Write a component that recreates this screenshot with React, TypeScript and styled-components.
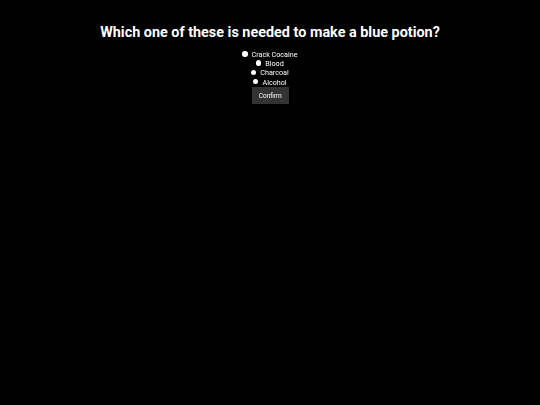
import React from "react";
import styled, { createGlobalStyle } from "styled-components";

const Global = createGlobalStyle`
  html, body { margin: 0; padding: 0; background: #000; }
  body { font-family: Roboto, "Liberation Sans", Arial, sans-serif; color: #fff; }
`;

const Page = styled.main`
  display: flex;
  flex-direction: column;
  align-items: center;
  padding-top: 24px;
`;

const Title = styled.h1`
  margin: 0 0 8.4px;
  font-family: Roboto, "Liberation Sans", Arial, sans-serif;
  font-size: 14.4px;
  line-height: 17px;
  font-weight: bold;
  color: #fff;
  text-align: center;
  white-space: nowrap;
`;

const Options = styled.div`
  display: flex;
  flex-direction: column;
  align-items: center;
  will-change: transform;
`;

const Option = styled.label`
  display: flex;
  align-items: center;
  gap: 4px;
  font-size: 7.2px;
  line-height: 9.2px;
  padding-top: 1px;
  margin-bottom: -1px;
  color: #fff;
`;

const Dot = styled.span`
  width: 5.5px;
  height: 5.5px;
  margin-bottom: 1.5px;
  border-radius: 50%;
  background: #fff;
  display: inline-block;
  flex: none;
`;

const Button = styled.button`
  margin-top: 1px;
  width: 36.6px;
  height: 17px;
  background: #333;
  color: #fff;
  border: none;
  font-family: Roboto, "Liberation Sans", Arial, sans-serif;
  font-size: 6.5px;
  padding: 0;
  will-change: transform;
`;

const options = ["Crack Cocaine", "Blood", "Charcoal", "Alcohol"];

export default function App() {
  return (
    <>
      <Global />
      <Page>
        <Title>Which one of these is needed to make a blue potion?</Title>
        <Options>
          {options.map((o) => (
            <Option key={o}>
              <Dot />
              {o}
            </Option>
          ))}
        </Options>
        <Button>Confirm</Button>
      </Page>
    </>
  );
}
